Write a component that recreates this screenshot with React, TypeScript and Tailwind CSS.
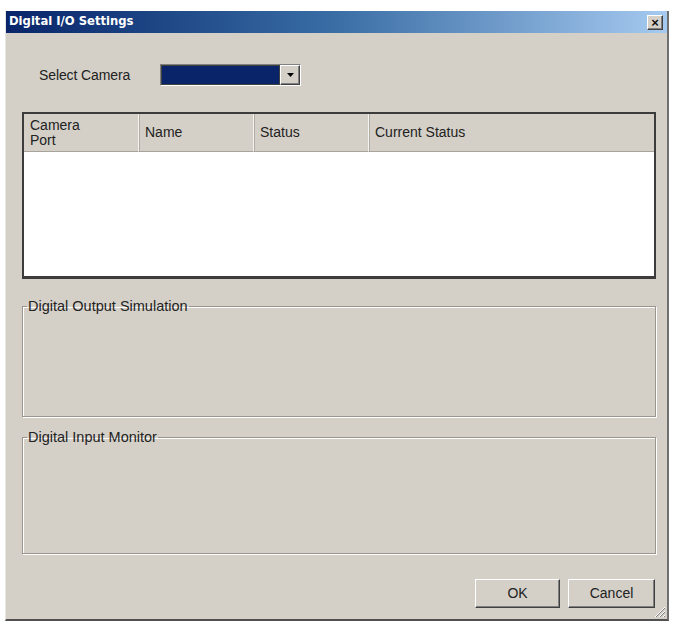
import React from "react";

const raised =
  "bg-[#d4d0c8] border border-t-white border-l-white border-r-[#404040] border-b-[#404040] shadow-[inset_-1px_-1px_0_#808080]";

function Button({ label, w }: { label: string; w: string }) {
  return (
    <button
      className={`${raised} ${w} h-[29px] text-[14px] text-[#222] flex items-center justify-center`}
      style={{ fontFamily: "'Liberation Sans', Arial, sans-serif" }}
    >
      {label}
    </button>
  );
}

function Group({ title, className }: { title: string; className: string }) {
  return (
    <fieldset
      className={`border border-[#9a968f] shadow-[inset_1px_1px_0_#ffffff,1px_1px_0_#ffffff] px-[1px] ${className}`}
    >
      <legend className="ml-[3px] px-[1px] text-[14.5px] text-[#222] leading-[16px]">{title}</legend>
    </fieldset>
  );
}

export default function App() {
  return (
    <div
      className="min-h-screen bg-white pt-[11px] pl-[5px]"
      style={{ fontFamily: "'Liberation Sans', Arial, sans-serif" }}
    >
      <div className="relative w-[664px] h-[610px] flex flex-col bg-[#d4d0c8] border-r-2 border-b-2 border-r-[#707070] border-b-[#505050] border-l border-l-[#e8e6e0]">
        {/* Title bar */}
        <div className="h-[22px] flex items-center justify-between pl-[3px] pr-[4px] bg-gradient-to-r from-[#0a246a] via-[#3a6ea5] to-[#a6caf0]">
          <span
            className="text-white font-bold text-[11.6px]"
            style={{ fontFamily: "'DejaVu Sans', Verdana, sans-serif" }}
          >
            Digital I/O Settings
          </span>
          <div
            className={`${raised} w-[16px] h-[15px] flex items-center justify-center text-[13px] leading-none font-bold text-[#111]`}
          >
            ×
          </div>
        </div>

        {/* Body */}
        <div className="flex flex-col pl-[16px] pr-[11px]">
          {/* Select camera row */}
          <div className="flex items-center mt-[31px] h-[22px]">
            <span className="ml-[17px] w-[121px] text-[14px] text-[#222] tracking-[-0.1px]">Select Camera</span>
            <div className="flex w-[141px] h-[22px] border border-t-[#808080] border-l-[#808080] border-r-white border-b-white">
              <div className="flex-1 bg-[#0a246a] border border-[#404040]"></div>
              <div className={`${raised} w-[20px] flex items-center justify-center`}>
                <svg width="7" height="4" viewBox="0 0 7 4">
                  <path d="M0 0h7L3.5 4z" fill="#000" />
                </svg>
              </div>
            </div>
          </div>

          {/* List view */}
          <div className="mt-[26px] h-[167px] border-2 border-[#3c3c3c] border-b-[3px] bg-white flex flex-col">
            <div className="h-[38px] flex bg-[#d4d0c8] text-[14px] text-[#222] leading-[15px]">
              <div className="w-[115px] flex items-center pl-[6px] border-r border-r-[#f4f4f0] shadow-[1px_0_0_#b0aca4] border-b border-b-[#a8a49c]">
                <span>
                  Camera
                  <br />
                  Port
                </span>
              </div>
              <div className="w-[115px] flex items-center pl-[6px] border-r border-r-[#f4f4f0] shadow-[1px_0_0_#b0aca4] border-b border-b-[#a8a49c]">
                Name
              </div>
              <div className="w-[115px] flex items-center pl-[6px] border-r border-r-[#f4f4f0] shadow-[1px_0_0_#b0aca4] border-b border-b-[#a8a49c]">
                Status
              </div>
              <div className="flex-1 flex items-center pl-[6px] border-b border-b-[#a8a49c]">Current Status</div>
            </div>
            <div className="flex-1 bg-white"></div>
          </div>

          {/* Group boxes */}
          <Group title="Digital Output Simulation" className="mt-[19px] h-[119px]" />
          <Group title="Digital Input Monitor" className="mt-[12px] h-[125px]" />

          {/* Buttons */}
          <div className="flex justify-end gap-[8px] mt-[25px] pr-[1px]">
            <Button label="OK" w="w-[85px]" />
            <Button label="Cancel" w="w-[87px]" />
          </div>
        </div>

        {/* Resize grip */}
        <svg className="absolute right-[1px] bottom-[1px]" width="13" height="13" viewBox="0 0 13 13">
          <path d="M12 2L2 12M12 6L6 12M12 10L10 12" stroke="#ffffff" strokeWidth="1" />
          <path d="M12 3L3 12M12 7L7 12M12 11L11 12" stroke="#808080" strokeWidth="1" />
        </svg>
      </div>
    </div>
  );
}
